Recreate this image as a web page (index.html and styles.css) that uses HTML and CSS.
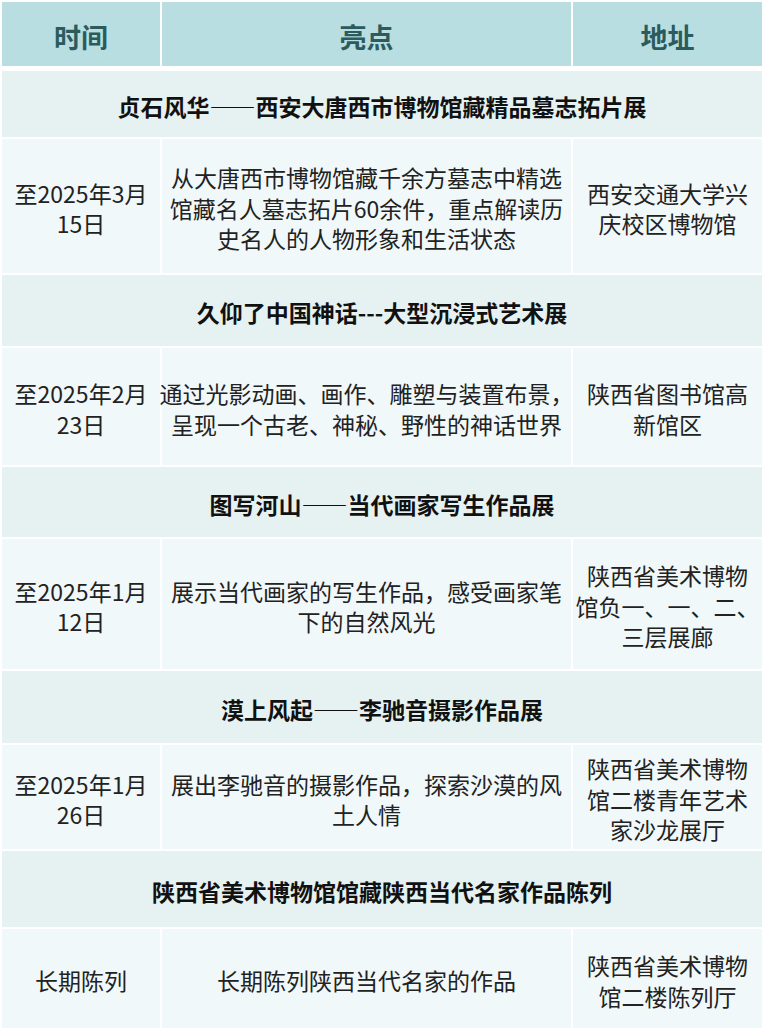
FILE: index.html
```html
<!DOCTYPE html>
<html lang="zh-CN">
<head>
<meta charset="utf-8">
<title>展览信息</title>
<link rel="stylesheet" href="styles.css">
</head>
<body>
<div class="sheet">
  <div class="cell head">时间</div>
  <div class="cell head">亮点</div>
  <div class="cell head">地址</div>

  <div class="cell title">贞石风华——西安大唐西市博物馆藏精品墓志拓片展</div>
  <div class="cell">至2025年3月<br>15日</div>
  <div class="cell">从大唐西市博物馆藏千余方墓志中精选<br>馆藏名人墓志拓片60余件，重点解读历<br>史名人的人物形象和生活状态</div>
  <div class="cell">西安交通大学兴<br>庆校区博物馆</div>

  <div class="cell title">久仰了中国神话---大型沉浸式艺术展</div>
  <div class="cell">至2025年2月<br>23日</div>
  <div class="cell">通过光影动画、画作、雕塑与装置布景，<br>呈现一个古老、神秘、野性的神话世界</div>
  <div class="cell">陕西省图书馆高<br>新馆区</div>

  <div class="cell title">图写河山——当代画家写生作品展</div>
  <div class="cell">至2025年1月<br>12日</div>
  <div class="cell">展示当代画家的写生作品，感受画家笔<br>下的自然风光</div>
  <div class="cell">陕西省美术博物<br>馆负一、一、二、<br>三层展廊</div>

  <div class="cell title">漠上风起——李驰音摄影作品展</div>
  <div class="cell">至2025年1月<br>26日</div>
  <div class="cell">展出李驰音的摄影作品，探索沙漠的风<br>土人情</div>
  <div class="cell">陕西省美术博物<br>馆二楼青年艺术<br>家沙龙展厅</div>

  <div class="cell title">陕西省美术博物馆馆藏陕西当代名家作品陈列</div>
  <div class="cell">长期陈列</div>
  <div class="cell">长期陈列陕西当代名家的作品</div>
  <div class="cell">陕西省美术博物<br>馆二楼陈列厅</div>
</div>
</body>
</html>
```

FILE: styles.css
```css
html, body {
  margin: 0;
  padding: 0;
  background: #ffffff;
}

body {
  font-family: "Noto Sans CJK SC", "Noto Sans", sans-serif;
  color: #222222;
}

.sheet {
  display: grid;
  grid-template-columns: 158px 409px 189px;
  grid-template-rows: 67px 66px 134px 71px 117px 70px 130px 72px 104px 76px 99px;
  column-gap: 2px;
  row-gap: 2px;
  padding: 2px 3px 3px 2px;
  width: 760px;
}

.cell {
  display: flex;
  align-items: center;
  justify-content: center;
  text-align: center;
  box-sizing: border-box;
  padding-top: 4px;
  background: #f1f8f9;
  font-size: 23px;
  line-height: 30.5px;
  white-space: nowrap;
}

.head {
  background: #b9dee1;
  color: #2c5b5d;
  font-weight: 700;
  font-size: 27px;
  margin-bottom: 3px;
  padding-top: 6px;
}

.title {
  grid-column: 1 / -1;
  background: #e6f1f2;
  color: #111111;
  font-weight: 700;
  font-size: 23px;
}
```
